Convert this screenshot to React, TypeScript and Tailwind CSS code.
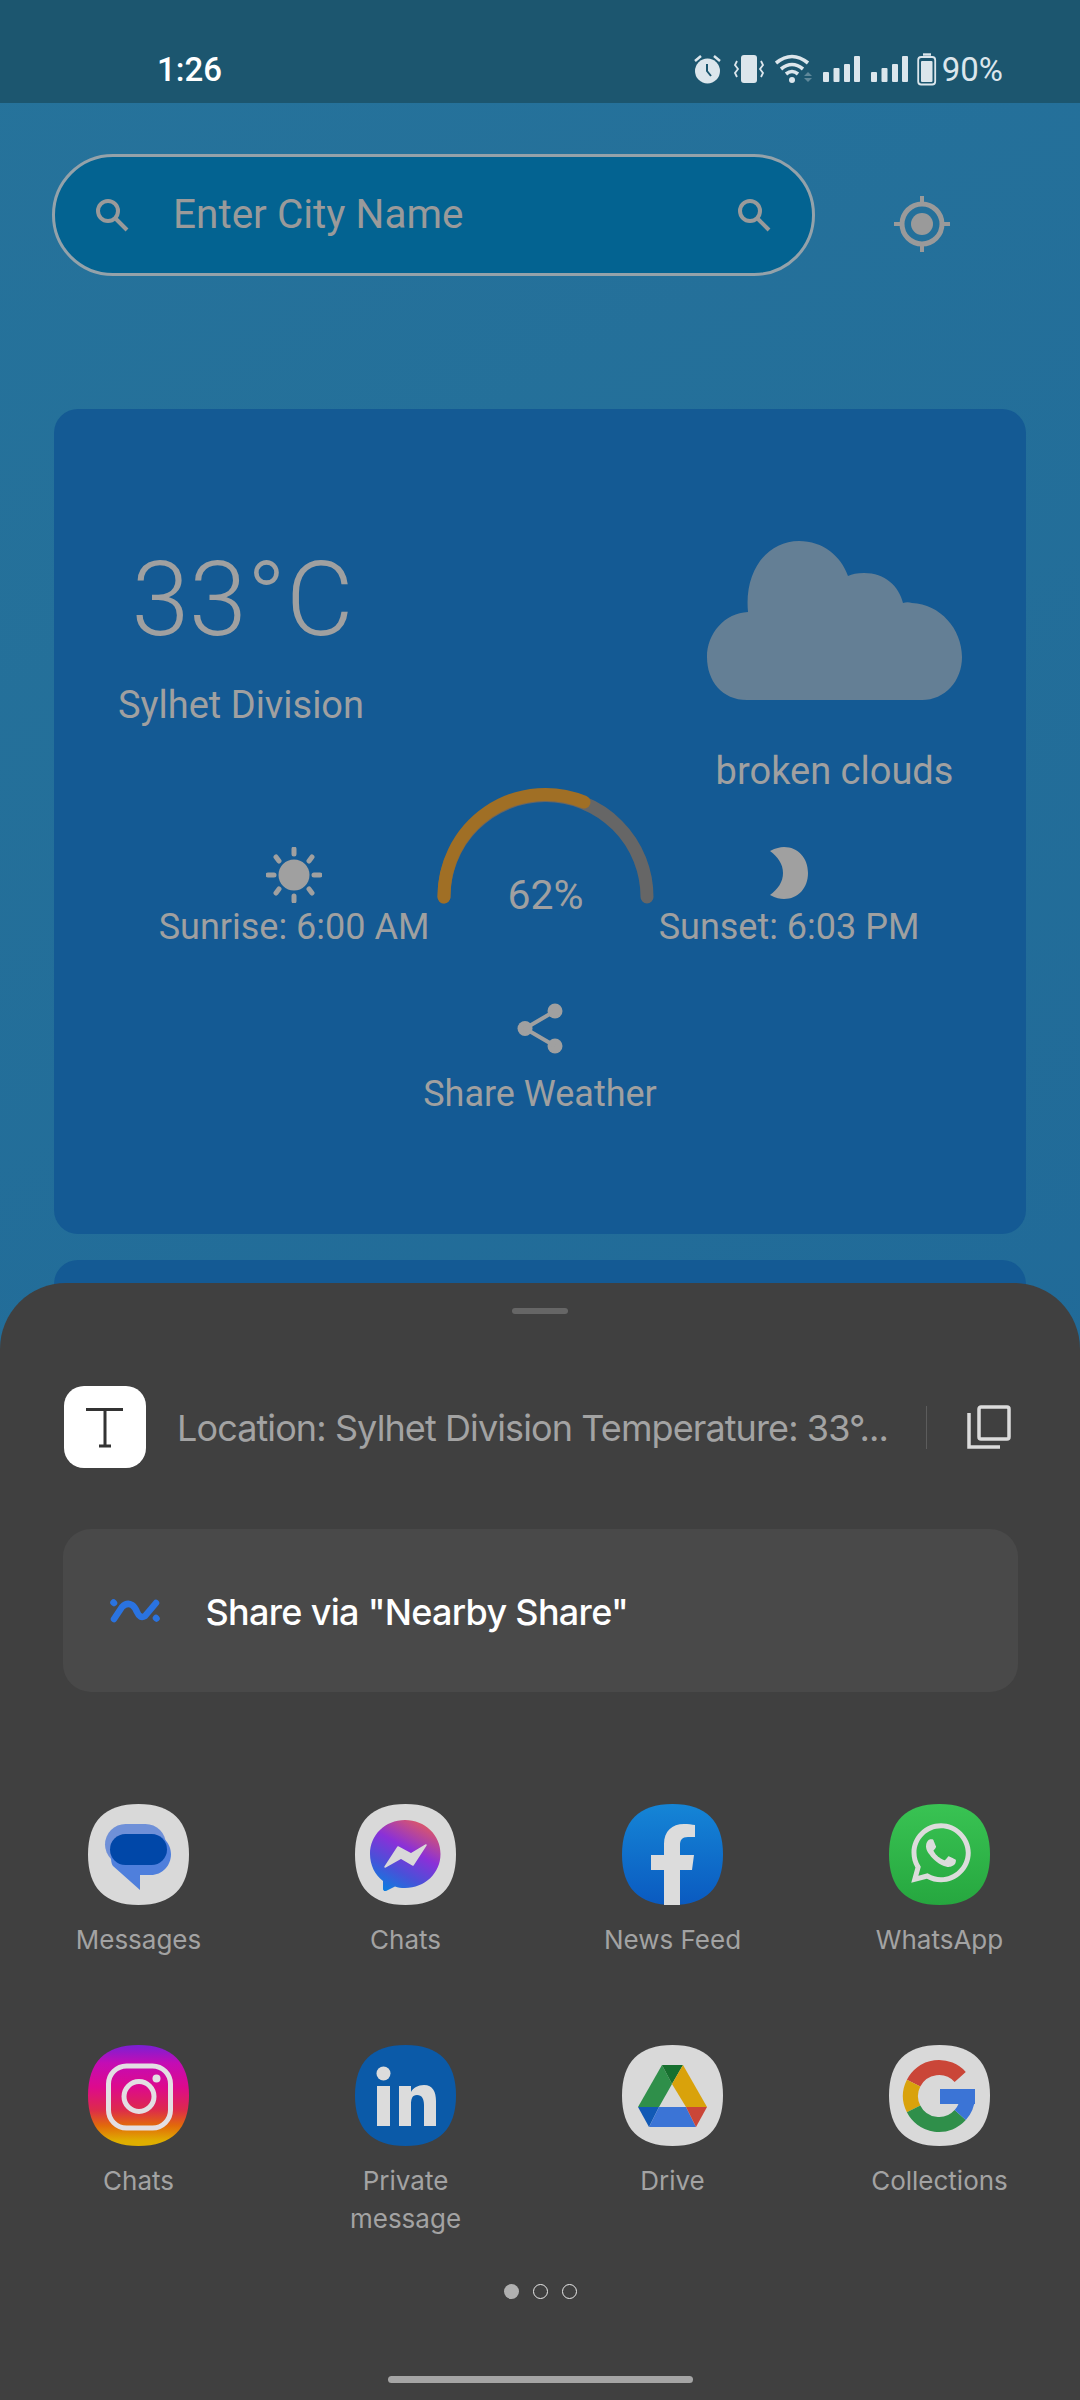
import type { ReactNode } from 'react'
import { FaWhatsapp } from 'react-icons/fa'

const SQUIRCLE = 'M50.5 0C84 0 101 17 101 50.5C101 84 84 101 50.5 101C17 101 0 84 0 50.5C0 17 17 0 50.5 0Z'

function SearchIcon() {
  return (
    <svg width="34" height="34" viewBox="0 0 34 34" fill="none" stroke="#9a9a9a" strokeWidth="4">
      <circle cx="13" cy="13" r="10" />
      <path d="M20 20L32 32" />
    </svg>
  )
}

function TargetIcon() {
  return (
    <svg width="56" height="56" viewBox="0 0 56 56" fill="none" stroke="#9a9a9a" strokeWidth="5">
      <circle cx="28" cy="28" r="20" />
      <circle cx="28" cy="28" r="11" fill="#9a9a9a" stroke="none" />
      <path d="M28 0V8M28 48V56M0 28H8M48 28H56" strokeWidth="4" />
    </svg>
  )
}

function StatusIcons() {
  const c = '#dce6ec'
  return (
    <div className="flex items-center">
      <svg width="29" height="30" viewBox="0 0 29 30" className="mr-[12px]">
        <circle cx="14.5" cy="17" r="12.5" fill={c} />
        <path d="M14 10V17L18 22" fill="none" stroke="#1c566f" strokeWidth="2" />
        <path d="M2 7L8 2M27 7L21 2" stroke={c} strokeWidth="2.5" />
      </svg>
      <svg width="30" height="28" viewBox="0 0 30 28" className="mr-[11px]">
        <rect x="7" y="0" width="16" height="28" rx="3" fill={c} />
        <path d="M3 6L1 10L4 14L1 18L3 22M27 6L29 10L26 14L29 18L27 22" fill="none" stroke={c} strokeWidth="1.8" />
      </svg>
      <svg width="40" height="30" viewBox="0 0 40 30" className="mr-[8px]">
        <path d="M1 9Q17 -4 33 9M6 15Q17 6 28 15M11 20Q17 15 23 20" fill="none" stroke={c} strokeWidth="3.6" />
        <circle cx="17" cy="26" r="3" fill={c} />
        <path d="M33 18L37 22H29ZM29 24H37L33 28Z" fill={c} opacity="0.35" />
      </svg>
      <SignalIcon color={c} />
      <div className="w-[11px]" />
      <SignalIcon color={c} />
      <svg width="20" height="33" viewBox="0 0 20 33" className="ml-[9px]">
        <path d="M6 1.5H14" stroke={c} strokeWidth="2.4" />
        <rect x="1.2" y="4" width="17" height="27.5" rx="3" fill="none" stroke={c} strokeWidth="1.8" />
        <rect x="4" y="8" width="11.5" height="21" rx="1" fill={c} />
      </svg>
      <span className="ml-[5px] text-[33px] leading-none text-[#dce6ec]">90%</span>
    </div>
  )
}

function SignalIcon({ color }: { color: string }) {
  return (
    <svg width="37" height="26" viewBox="0 0 37 26">
      <rect x="0" y="16" width="6" height="10" rx="1" fill={color} />
      <rect x="10.5" y="12" width="6" height="14" rx="1" fill={color} />
      <rect x="21" y="8" width="6" height="18" rx="1" fill={color} />
      <rect x="31" y="0" width="6" height="26" rx="1" fill={color} />
    </svg>
  )
}

function Cloud() {
  return (
    <svg width="255" height="159" viewBox="0 0 255 159">
      <path
        d="M40 159C15 159 0 140 0 116C0 92 18 72 41 71C37 30 60 0 92 0C116 0 134 15 141 35C145 33 150 32 157 32C178 32 192 45 196 62C199 61 202 61 205 62C233 63 255 88 255 116C255 140 238 159 215 159Z"
        fill="#647f95"
      />
    </svg>
  )
}

function Sun() {
  return (
    <svg width="56" height="56" viewBox="0 0 56 56" fill="#a0a0a0" stroke="#a0a0a0">
      <circle cx="28" cy="28" r="15.5" stroke="none" />
      <path
        d="M28 2V7M28 49V54M2 28H8M48 28H54M10 10L13 14M46 10L43 14M10 46L13 42M46 46L43 42"
        strokeWidth="5"
        strokeLinecap="round"
      />
    </svg>
  )
}

function Moon() {
  return (
    <svg width="38" height="52" viewBox="0 0 38 52">
      <path d="M0 4C6 1 10 0 14 0C28 0 38 11 38 26C38 41 28 52 14 52C10 52 6 51 0 48C8 42 13 35 13 26C13 17 8 10 0 4Z" fill="#a0a0a0" />
    </svg>
  )
}

function Gauge() {
  return (
    <div className="relative -mt-px h-[119px] w-[217px]">
      <svg width="217" height="119" viewBox="0 0 217 119" fill="none" strokeWidth="13" strokeLinecap="round">
        <path d="M7 111A101.5 101.5 0 0 1 210 111" stroke="#666666" />
        <path d="M7 111A101.5 101.5 0 0 1 147 16" stroke="#a06f25" />
      </svg>
      <div className="absolute inset-x-0 bottom-[-12px] text-center text-[41px] leading-[44px] text-[#a0a0a0]">62%</div>
    </div>
  )
}

function ShareIcon() {
  return (
    <svg width="46" height="51" viewBox="0 0 46 51" fill="#a0a0a0" stroke="#a0a0a0">
      <circle cx="38" cy="8" r="7.5" stroke="none" />
      <circle cx="8" cy="25.5" r="7.5" stroke="none" />
      <circle cx="38" cy="43" r="7.5" stroke="none" />
      <path d="M38 8L8 25.5L38 43" fill="none" strokeWidth="4" />
    </svg>
  )
}

function AppIcon({ bg = '#d9d9d9', children, defs }: { bg?: string; children: ReactNode; defs?: ReactNode }) {
  return (
    <svg width="101" height="101" viewBox="0 0 101 101">
      {defs}
      <path d={SQUIRCLE} fill={bg} />
      {children}
    </svg>
  )
}

const apps: { label: string; icon: ReactNode }[] = [
  {
    label: 'Messages',
    icon: (
      <AppIcon>
        <rect x="17" y="20" width="61" height="41" rx="20.5" fill="#6f90d8" />
        <path d="M42 30H63C74 30 83 39 83 50C83 62 74 71 63 71H52V86L25 62C21 57 22 30 42 30Z" fill="#4f7fdc" />
        <rect x="22" y="30" width="57" height="31" rx="15.5" fill="#0047a8" />
      </AppIcon>
    ),
  },
  {
    label: 'Chats',
    icon: (
      <AppIcon
        defs={
          <defs>
            <linearGradient id="msgr" x1="0.2" y1="1" x2="0.75" y2="0">
              <stop offset="0" stopColor="#0a7fe0" />
              <stop offset="0.3" stopColor="#4a50d8" />
              <stop offset="0.6" stopColor="#8a30d8" />
              <stop offset="1" stopColor="#e25a60" />
            </linearGradient>
          </defs>
        }
      >
        <path
          d="M50 16C70 16 85.500 31 85.500 50C85.500 69 70 84 50 84C46 84 43 83.500 40 82.500L31 87C29 87.500 28 86 28 85V77C20 71 15 61 15 50C15 31 30 16 50 16Z"
          fill="url(#msgr)"
        />
        <path
          d="M30 63L43 43L56 50L71 41L58 61L46 54Z"
          fill="#d9d9d9"
          stroke="#d9d9d9"
          strokeWidth="1.500"
          strokeLinejoin="round"
        />
      </AppIcon>
    ),
  },
  {
    label: 'News Feed',
    icon: (
      <AppIcon
        bg="url(#fb)"
        defs={
          <defs>
            <linearGradient id="fb" x1="0" y1="0" x2="0" y2="1">
              <stop offset="0" stopColor="#1585d6" />
              <stop offset="1" stopColor="#0a5ac0" />
            </linearGradient>
          </defs>
        }
      >
        <path
          d="M42 101V66H29V51H42V40C42 27 50 20 62 20C66 20 70 20.500 73 21V33H66C60 33 58 36 58 41V51H72L70 66H58V101Z"
          fill="#dcdcdc"
        />
      </AppIcon>
    ),
  },
  {
    label: 'WhatsApp',
    icon: (
      <AppIcon
        bg="url(#wa)"
        defs={
          <defs>
            <linearGradient id="wa" x1="0" y1="0" x2="0" y2="1">
              <stop offset="0" stopColor="#39c353" />
              <stop offset="1" stopColor="#26a73f" />
            </linearGradient>
          </defs>
        }
      >
        <FaWhatsapp x="18" y="15" size={68} color="#dcdcdc" />
      </AppIcon>
    ),
  },
  {
    label: 'Chats',
    icon: (
      <AppIcon
        bg="url(#ig)"
        defs={
          <defs>
            <linearGradient id="ig" x1="0" y1="0" x2="0" y2="1">
              <stop offset="0" stopColor="#7a20d4" />
              <stop offset="0.18" stopColor="#c40cb4" />
              <stop offset="0.42" stopColor="#dd0a8c" />
              <stop offset="0.64" stopColor="#dd2a4c" />
              <stop offset="0.8" stopColor="#e26a0a" />
              <stop offset="0.95" stopColor="#dfae00" />
            </linearGradient>
          </defs>
        }
      >
        <rect x="20.500" y="21" width="62" height="62" rx="18" fill="none" stroke="#e3dfe3" strokeWidth="5" />
        <circle cx="51" cy="51.500" r="15" fill="none" stroke="#e3dfe3" strokeWidth="5" />
        <circle cx="68.500" cy="33.500" r="4" fill="#e3dfe3" />
      </AppIcon>
    ),
  },
  {
    label: 'Private message',
    icon: (
      <AppIcon bg="#0b5aa8">
        <circle cx="28.500" cy="28.500" r="7" fill="#dcdcdc" />
        <rect x="22" y="41" width="13" height="40" fill="#dcdcdc" />
        <path
          d="M44 41H56V47C58 43 63 40 69 40C78 40 81 47 81 56V81H69V60C69 54 67 50 62 50C57 50 56 54 56 60V81H44Z"
          fill="#dcdcdc"
        />
      </AppIcon>
    ),
  },
  {
    label: 'Drive',
    icon: (
      <AppIcon>
        <path d="M40 20L16 62H37L50 39Z" fill="#2f8f4a" />
        <path d="M40 20H61L50 39Z" fill="#17702f" />
        <path d="M61 20L85 62H64L50 39Z" fill="#d9a20b" />
        <path d="M16 62H37L27 82Z" fill="#1159b5" />
        <path d="M37 62H64L74 82H27Z" fill="#3b74d6" />
        <path d="M64 62H85L74 82Z" fill="#ca4638" />
      </AppIcon>
    ),
  },
  {
    label: 'Collections',
    icon: (
      <AppIcon>
        <g fill="none" strokeWidth="15">
          <path d="M71.200 31.900A28.500 28.500 0 0 0 24.600 38.100" stroke="#ca4638" />
          <path d="M24.600 38.100A28.500 28.500 0 0 0 24.600 63.900" stroke="#d9a20b" />
          <path d="M24.600 63.900A28.500 28.500 0 0 0 71.200 70.100" stroke="#2f8f4a" />
          <path d="M71.200 70.100A28.500 28.500 0 0 0 78.500 52" stroke="#3b74d6" />
        </g>
        <rect x="51" y="44" width="35" height="15" fill="#3b74d6" />
      </AppIcon>
    ),
  },
]

function ShareSheet() {
  return (
    <div className="absolute inset-x-0 bottom-0 flex h-[1117px] flex-col items-center rounded-t-[66px] bg-[#404040] font-['Inter',sans-serif]">
      <div className="mt-[25px] h-[6px] w-[56px] rounded-full bg-[#666666]" />

      <div className="mt-[72px] flex h-[82px] w-full items-center pl-[64px]">
        <div className="h-[82px] w-[82px] rounded-[20px] bg-white">
          <svg width="82" height="82" viewBox="0 0 82 82" fill="none" stroke="#333333" strokeWidth="3">
            <path d="M22 23.500H59M41 23.500V60M35 60H47" />
          </svg>
        </div>
        <span className="mt-[2px] ml-[31px] w-[712px] text-[36px] tracking-[-0.9px] whitespace-nowrap text-[#a3a3a3]">
          Location: Sylhet Division Temperature: 33°...
        </span>
        <div className="ml-[37px] h-[43px] w-px bg-[#5c5c5c]" />
        <svg width="44" height="44" viewBox="0 0 44 44" fill="none" stroke="#dcdcdc" strokeWidth="3.500" className="ml-[40px]">
          <rect x="12" y="2" width="30" height="32" rx="2" />
          <path d="M2 8V42H33" />
        </svg>
      </div>

      <div className="mt-[61px] flex h-[163px] w-[955px] items-center rounded-[28px] bg-[#494949] pl-[47px]">
        <svg width="50" height="24" viewBox="0 0 50 24" fill="none" stroke="#2a73e0" strokeWidth="6.500" strokeLinecap="round">
          <path d="M4 20L12 8Q17 3 22 6Q25 8 27 13Q30 20 35 17L46 4" />
          <path d="M3.500 3.500L4 4M46 19L46.500 19.500" />
        </svg>
        <span className="mt-[2px] ml-[46px] text-[36px] font-medium tracking-[-0.7px] text-white">Share via "Nearby Share"</span>
      </div>

      <div className="mt-[112px] mr-[2px] grid w-[1068px] grid-cols-4">
        {apps.map((app, i) => (
          <div key={i} className="flex h-[241px] flex-col items-center">
            {app.icon}
            <span className="mt-[16px] w-[200px] text-center text-[26px] leading-[38px] text-[#a3a3a3]">
              {app.label === 'Private message' ? (
                <>
                  Private
                  <br />
                  message
                </>
              ) : (
                app.label
              )}
            </span>
          </div>
        ))}
      </div>

      <div className="mt-[-2px] flex gap-[14px]">
        <div className="h-[15px] w-[15px] rounded-full bg-[#b0b0b0]" />
        <div className="h-[15px] w-[15px] rounded-full border-[1.5px] border-[#e8e8e8]" />
        <div className="h-[15px] w-[15px] rounded-full border-[1.5px] border-[#e8e8e8]" />
      </div>

      <div className="mt-[77px] h-[7px] w-[305px] rounded-full bg-[#a5a5a5]" />
    </div>
  )
}

export default function App() {
  return (
    <div className="relative h-[2400px] w-[1080px] overflow-hidden bg-[linear-gradient(150deg,#26739b,#1e6697)] font-['Roboto',sans-serif]">
      <div className="flex h-[103px] items-center justify-between bg-[#1c566f] pt-[35px] pr-[77px] pl-[157px]">
        <span className="text-[33px] font-medium leading-none text-white">1:26</span>
        <StatusIcons />
      </div>

      <div className="mt-[51px] flex items-center pl-[52px]">
        <div className="flex h-[122px] w-[763px] items-center rounded-full border-[3px] border-[#94a2aa] bg-[#036391] pr-[41px] pl-[40px]">
          <SearchIcon />
          <span className="mb-[2px] ml-[44px] flex-1 text-[40.5px] text-[#9a9a9a]">Enter City Name</span>
          <SearchIcon />
        </div>
        <div className="mt-[18px] ml-[79px]">
          <TargetIcon />
        </div>
      </div>

      <div className="mx-[54px] mt-[133px] h-[825px] rounded-[24px] bg-[#145a94] text-[#a0a0a0]">
        <div className="flex justify-between pt-[132px] pr-[64px] pl-[64px]">
          <div className="flex w-[246px] flex-col items-center">
            <span className="mt-[3px] ml-[3px] text-[104px] leading-[112px] font-light">33°C</span>
            <span className="mt-[27px] text-[38px] leading-[44px] whitespace-nowrap">Sylhet Division</span>
          </div>
          <div className="flex w-[255px] flex-col items-center">
            <Cloud />
            <span className="mt-[49px] text-[38px] leading-[44px]">broken clouds</span>
          </div>
        </div>

        <div className="mt-[-6px] flex items-start pl-[106px]">
          <div className="mt-[60px] flex w-[268px] flex-col items-center">
            <Sun />
            <span className="mt-[2px] text-[36px] leading-[44px] whitespace-nowrap">Sunrise: 6:00 AM</span>
          </div>
          <div className="ml-[9px]">
            <Gauge />
          </div>
          <div className="mt-[60px] ml-[6px] flex w-[258px] flex-col items-center">
            <Moon />
            <span className="mt-[6px] text-[36px] leading-[44px] whitespace-nowrap">Sunset: 6:03 PM</span>
          </div>
        </div>

        <div className="mt-[54px] flex flex-col items-center">
          <ShareIcon />
          <span className="mt-[18px] text-[36px] leading-[44px]">Share Weather</span>
        </div>
      </div>

      <div className="mx-[54px] mt-[26px] h-[200px] rounded-[24px] bg-[#145a94]" />

      <ShareSheet />
    </div>
  )
}
